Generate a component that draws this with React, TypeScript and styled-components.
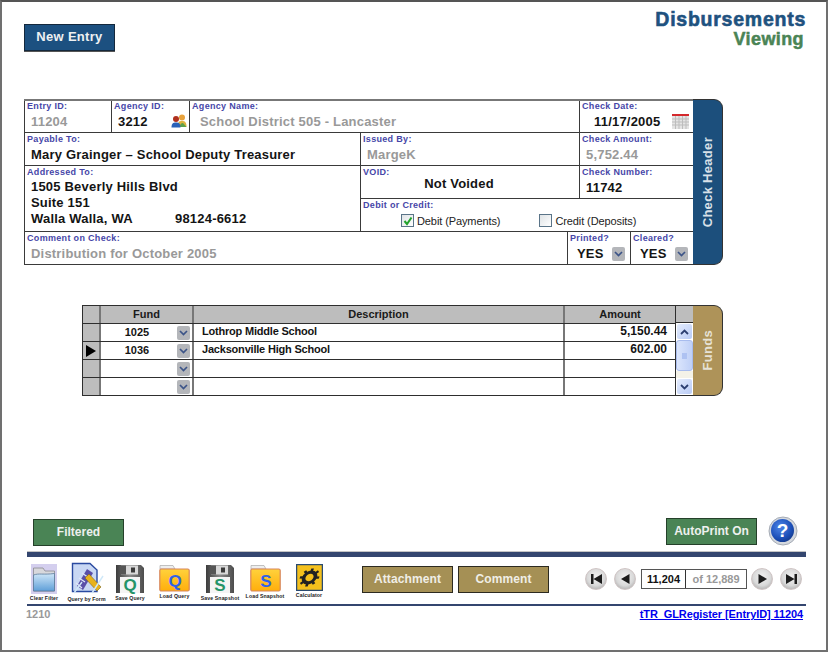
import React from 'react';
import styled, { createGlobalStyle } from 'styled-components';

const GlobalStyle = createGlobalStyle`
  html, body {
    margin: 0;
    padding: 0;
    background: #ffffff;
    font-family: "Liberation Sans", Arial, sans-serif;
  }
`;

const Page = styled.div`
  width: 828px;
  height: 652px;
  box-sizing: border-box;
  border: 2px solid #707070;
  border-top-color: #555;
  background: #fff;
  overflow: hidden;
`;

const Header = styled.header`
  height: 97px;
  box-sizing: border-box;
  display: flex;
  justify-content: space-between;
  align-items: flex-start;
  padding: 7px 20px 0 22px;
`;

const NewEntryButton = styled.button`
  width: 91px;
  height: 27px;
  margin-top: 15px;
  padding: 0 0 2px;
  background: #1c5080;
  border: 1px solid #14283c;
  box-shadow: 0 1px 0 #555;
  color: #eef0f2;
  font: bold 13px "Liberation Sans", Arial, sans-serif;
  letter-spacing: 0.3px;
`;

const TitleBlock = styled.div`
  text-align: right;
  font-weight: bold;
  line-height: 20px;
`;

const TitleMain = styled.div`
  color: #1f527f;
  font-size: 19.5px;
  letter-spacing: 0.75px;
  -webkit-text-stroke: 0.6px #1f527f;
`;

const TitleSub = styled.div`
  color: #4a8455;
  font-size: 18px;
  letter-spacing: 0.4px;
  padding-right: 2px;
  -webkit-text-stroke: 0.5px #4a8455;
`;

const CheckCard = styled.section`
  display: flex;
  margin-left: 22px;
  width: 699px;
  height: 166px;
`;

const FormGrid = styled.div`
  display: grid;
  grid-template-columns: 86px 77px 170px 206px 11px 50px 62px;
  grid-template-rows: 31px repeat(4, 32px);
  gap: 1px;
  padding: 0 0 1px 1px;
  background: #3a3a3a;
  border-top: 2px solid #777;
`;

const Field = styled.div<{ $col: string; $row?: string; $first?: boolean }>`
  grid-column: ${(p) => p.$col};
  grid-row: ${(p) => p.$row || 'auto'};
  background: #fff;
  padding: ${(p) => (p.$first ? 0 : 1)}px 2px 0 2px;
  min-width: 0;
`;

const Label = styled.div`
  color: #4646a8;
  font-size: 9px;
  font-weight: bold;
  line-height: 11px;
  letter-spacing: 0.32px;
  white-space: nowrap;
`;

const ValueRow = styled.div<{ $pad?: number; $end?: number }>`
  display: flex;
  justify-content: space-between;
  align-items: center;
  height: 18px;
  padding-left: ${(p) => p.$pad ?? 4}px;
  padding-right: ${(p) => p.$end ?? 0}px;
`;

const Value = styled.span<{ $muted?: boolean }>`
  color: ${(p) => (p.$muted ? '#999999' : '#141414')};
  font-size: 13px;
  font-weight: bold;
  letter-spacing: 0.2px;
  white-space: nowrap;
`;

const AddressLines = styled.div`
  padding: 1px 0 0 4px;
`;

const AddressLine = styled.div`
  height: 16px;
  line-height: 16px;
  color: #141414;
  font-size: 13px;
  font-weight: bold;
  letter-spacing: 0.2px;
  white-space: nowrap;
`;

const CityPart = styled.span`
  display: inline-block;
  width: 144px;
`;

const VoidValue = styled.div`
  padding-right: 22px;
  text-align: center;
  color: #141414;
  font-size: 13px;
  font-weight: bold;
  letter-spacing: 0.2px;
  line-height: 16px;
  margin-top: -2px;
`;

const ChoiceRow = styled.div`
  display: flex;
  align-items: center;
  padding: 3px 0 0 38px;
  gap: 39px;
`;

const Choice = styled.label`
  display: flex;
  align-items: center;
  gap: 3px;
  color: #222;
  font-size: 11px;
  letter-spacing: -0.1px;
  white-space: nowrap;
`;

const CheckBox = styled.span`
  width: 11px;
  height: 11px;
  flex: none;
  display: flex;
  align-items: center;
  justify-content: center;
  border: 1px solid #5a7488;
  background: linear-gradient(135deg, #dfe3e6, #ffffff);
`;

const SideTab = styled.div<{ $color: string; $text: string }>`
  width: 30px;
  flex: none;
  display: flex;
  align-items: center;
  justify-content: center;
  background: ${(p) => p.$color};
  color: ${(p) => p.$text};
  border-radius: 0 9px 9px 0;
  border: solid #333;
  border-width: 1px 1px 1px 0;
  box-sizing: border-box;
`;

const SideTabText = styled.span`
  writing-mode: vertical-rl;
  transform: rotate(180deg);
  font-size: 13px;
  font-weight: bold;
  letter-spacing: 0.3px;
`;

const ComboButton = styled.span`
  width: 13px;
  height: 14px;
  flex: none;
  display: flex;
  align-items: center;
  justify-content: center;
  background: #b4b6ba;
  border-radius: 2px;
`;

const YesRow = styled.div`
  display: flex;
  justify-content: space-between;
  align-items: center;
  height: 19px;
  padding: 0 3px 0 7px;
`;

const FundsCard = styled.section`
  display: flex;
  margin: 40px 0 0 80px;
  width: 641px;
  height: 91px;
`;

const FundsGrid = styled.div`
  width: 594px;
  flex: none;
  box-sizing: border-box;
  border: solid #2e2e2e;
  border-width: 1px 1px 0 1px;
`;

const FundRow = styled.div<{ $head?: boolean }>`
  display: grid;
  grid-template-columns: 18px 93px 371px 1fr;
  height: 18px;
  box-sizing: border-box;
  border-bottom: 1px solid #2e2e2e;
  background: ${(p) => (p.$head ? '#bdbdbd' : '#ffffff')};
`;

const Selector = styled.div`
  background: #bdbdbd;
  border-right: 2px solid #777;
  display: flex;
  align-items: center;
  justify-content: center;
`;

const HeadCell = styled.div<{ $last?: boolean }>`
  border-right: ${(p) => (p.$last ? '0' : '2px solid #777')};
  text-align: center;
  color: #1a1a1a;
  font-size: 11px;
  font-weight: bold;
  line-height: 17px;
`;

const FundCell = styled.div`
  border-right: 2px solid #777;
  display: flex;
  align-items: center;
  padding-right: 2px;
  font-size: 11px;
  font-weight: bold;
  color: #141414;
`;

const FundCode = styled.span`
  flex: 1;
  text-align: center;
  padding: 0 4px 2px 0;
`;

const DescCell = styled.div`
  border-right: 2px solid #777;
  padding-left: 8px;
  color: #141414;
  font-size: 11px;
  font-weight: bold;
  line-height: 15px;
  letter-spacing: -0.2px;
`;

const AmountCell = styled.div`
  padding-right: 8px;
  text-align: right;
  color: #141414;
  font-size: 12px;
  font-weight: bold;
  line-height: 15px;
`;

const ScrollColumn = styled.div`
  width: 17px;
  flex: none;
  display: flex;
  flex-direction: column;
  border-bottom: 1px solid #2e2e2e;
`;

const ScrollHead = styled.div`
  height: 18px;
  flex: none;
  box-sizing: border-box;
  background: #bdbdbd;
  border-top: 1px solid #2e2e2e;
  border-bottom: 1px solid #2e2e2e;
`;

const ScrollButton = styled.div`
  height: 17px;
  flex: none;
  display: flex;
  align-items: center;
  justify-content: center;
  box-sizing: border-box;
  background: linear-gradient(135deg, #e4ecfd, #b9cbf5);
  border: 1px solid #fff;
  border-radius: 3px;
`;

const ScrollThumb = styled.div`
  height: 31px;
  flex: none;
  display: flex;
  align-items: center;
  justify-content: center;
  box-sizing: border-box;
  background: linear-gradient(90deg, #dbe5fc, #bfd0f7);
  border: 1px solid #a8bcee;
  border-radius: 3px;
`;

const ThumbGrip = styled.span`
  width: 5px;
  height: 6px;
  background: #aec2f2;
`;

const ScrollTrack = styled.div`
  flex: 1;
  background: #f4f2e8;
`;

const ActionRow = styled.div`
  display: flex;
  justify-content: space-between;
  align-items: flex-start;
  height: 35px;
  margin-top: 120px;
  padding: 0 28px 0 31px;
`;

const GreenButton = styled.button<{ $top: number }>`
  width: 91px;
  height: 27px;
  margin-top: ${(p) => p.$top}px;
  padding: 0 0 1px;
  background: #4a8455;
  border: 1px solid #25402a;
  color: #eef0ee;
  font: bold 12px "Liberation Sans", Arial, sans-serif;
`;

const AutoGroup = styled.div`
  display: flex;
  align-items: flex-start;
  gap: 11px;
`;

const HeavyRule = styled.div`
  height: 5px;
  margin: 0 20px 0 25px;
  background: #34466f;
  border-top: 1px solid #c4c4c4;
`;

const ToolBar = styled.div`
  display: flex;
  align-items: flex-start;
  height: 47px;
  box-sizing: border-box;
  padding: 5px 0 0 21px;
`;

const ToolGroup = styled.div`
  display: flex;
  align-items: flex-start;
`;

const Tool = styled.div<{ $width: number; $top?: number }>`
  width: ${(p) => p.$width}px;
  margin-top: ${(p) => p.$top ?? 2}px;
  display: flex;
  flex-direction: column;
  align-items: center;
`;

const ToolCaption = styled.span`
  margin-top: 1px;
  color: #222;
  font-size: 5.2px;
  font-weight: bold;
  line-height: 6px;
  letter-spacing: 0.1px;
  white-space: nowrap;
`;

const TanGroup = styled.div`
  display: flex;
  gap: 5px;
  margin: 4px 0 0 31px;
`;

const TanButton = styled.button`
  width: 91px;
  height: 27px;
  padding: 0 0 1px;
  background: #a59055;
  border: 1px solid #2c2a20;
  color: #f0eee6;
  font: bold 12px "Liberation Sans", Arial, sans-serif;
  letter-spacing: 0.1px;
`;

const Navigator = styled.div`
  display: flex;
  align-items: center;
  margin: 6px 0 0 36px;
`;

const NavButton = styled.span<{ $gap?: number }>`
  width: 22px;
  height: 22px;
  flex: none;
  margin-left: ${(p) => p.$gap ?? 0}px;
  display: flex;
  align-items: center;
  justify-content: center;
  border-radius: 50%;
  box-sizing: border-box;
  background: radial-gradient(circle at 50% 40%, #f2f2f2 0%, #d9d9d9 55%, #b5b5b5 80%, #efe0e0 100%);
  border: 1px solid #cfc4c4;
`;

const RecordBox = styled.div`
  display: flex;
  height: 20px;
  margin: 0 4px 0 5px;
  box-sizing: border-box;
  border: 1px solid #555;
  font-size: 11px;
  font-weight: bold;
  line-height: 18px;
`;

const RecordCurrent = styled.span`
  width: 43px;
  text-align: center;
  color: #111;
  border-right: 1px solid #333;
`;

const RecordTotal = styled.span`
  width: 60px;
  text-align: center;
  color: #999;
  font-weight: bold;
`;

const ThinRule = styled.div`
  height: 2px;
  margin: 0 20px 0 25px;
  background: #34466f;
`;

const StatusRow = styled.div`
  display: flex;
  justify-content: space-between;
  padding: 2px 23px 0 24px;
  font-size: 11px;
  font-weight: bold;
`;

const RecordId = styled.span`
  color: #999;
`;

const SourceLink = styled.a`
  color: #0000ee;
  text-decoration: underline;
  font-size: 11px;
  letter-spacing: -0.1px;
`;

const ComboChevron = () => (
  <svg width="9" height="6" viewBox="0 0 9 6">
    <path d="M1 1 L4.5 4.5 L8 1" fill="none" stroke="#3c5488" strokeWidth="1.7" />
  </svg>
);

const PeopleIcon = () => (
  <svg width="16" height="14" viewBox="0 0 16 14">
    <circle cx="11" cy="3.5" r="3" fill="#e8a23c" />
    <path d="M6.5 13 C6.5 8 8 7 11 7 C14 7 15.5 8 15.5 13 Z" fill="#e0b23c" />
    <path d="M9 13 C9 10 10 9 12 9 L15.5 13 Z" fill="#5ca04a" />
    <circle cx="5" cy="5" r="3" fill="#b0301e" />
    <path d="M0.5 13.5 C0.5 9.5 2 8.5 5 8.5 C8 8.5 9.5 9.5 9.5 13.5 Z" fill="#2a62b8" />
  </svg>
);

const CalendarIcon = () => (
  <svg width="17" height="15" viewBox="0 0 17 15">
    <rect x="0" y="0" width="17" height="2" fill="#d4282c" />
    <rect x="0" y="2" width="17" height="13" fill="#e4e4e4" />
    <path
      d="M0 5 H17 M0 8 H17 M0 11 H17 M3.5 2 V15 M7 2 V15 M10.5 2 V15 M14 2 V15"
      stroke="#bdbdbd"
      strokeWidth="1"
    />
  </svg>
);

const GreenCheck = () => (
  <svg width="10" height="10" viewBox="0 0 10 10">
    <path d="M1.5 5 L4 8 L8.5 1.5" fill="none" stroke="#22a22c" strokeWidth="2" />
  </svg>
);

const RowPointer = () => (
  <svg width="10" height="12" viewBox="0 0 10 12">
    <path d="M0 0 L10 6 L0 12 Z" fill="#000" />
  </svg>
);

const ScrollChevron = ({ up }: { up?: boolean }) => (
  <svg width="9" height="6" viewBox="0 0 9 6">
    <path
      d={up ? 'M1 5 L4.5 1.5 L8 5' : 'M1 1 L4.5 4.5 L8 1'}
      fill="none"
      stroke="#2c3f70"
      strokeWidth="1.8"
    />
  </svg>
);

const HelpIcon = () => (
  <svg width="30" height="30" viewBox="0 0 30 30">
    <defs>
      <radialGradient id="helpBlue" cx="40%" cy="35%" r="70%">
        <stop offset="0%" stopColor="#4f86e8" />
        <stop offset="70%" stopColor="#1c4fb8" />
        <stop offset="100%" stopColor="#143a8c" />
      </radialGradient>
    </defs>
    <circle cx="15" cy="15" r="14" fill="#d4d8de" stroke="#a6acb6" strokeWidth="1" />
    <circle cx="14.5" cy="14.5" r="11.5" fill="url(#helpBlue)" />
    <text x="14.5" y="21" textAnchor="middle" fontFamily="Liberation Sans" fontSize="19" fontWeight="bold" fill="#fff">
      ?
    </text>
  </svg>
);

const ClearFilterIcon = () => (
  <svg width="26" height="30" viewBox="0 0 26 30">
    <defs>
      <linearGradient id="clearFolder" x1="0" y1="0" x2="0" y2="1">
        <stop offset="0%" stopColor="#cfe6f8" />
        <stop offset="100%" stopColor="#5f9fd8" />
      </linearGradient>
    </defs>
    <rect width="26" height="30" fill="#d4cfee" />
    <path d="M2.5 4 H12 L14 7 H23.5 V27 H2.5 Z" fill="#d8d8dc" stroke="#8a8a90" strokeWidth="0.8" />
    <path d="M2.5 11 C8 9 12 11 23.5 9.5 V27 H2.5 Z" fill="url(#clearFolder)" stroke="#5a7a9a" strokeWidth="0.8" />
  </svg>
);

const QueryFormIcon = () => (
  <svg width="34" height="33" viewBox="0 0 34 33">
    <rect x="2" y="1" width="23" height="30" fill="#ffffff" />
    <path d="M2.5 1.5 H20 L27 8 V29.5 H2.5 Z" fill="#c9d8f4" stroke="#2a4aa0" strokeWidth="1.4" />
    <path d="M7 24 L17 7 L23 11 L13 28 Z" fill="#5a4fa8" />
    <path d="M9 16 L15 20 M12 11 L19 16 M6 21 L12 26" stroke="#dfe6f8" strokeWidth="1.3" />
    <path d="M15 16 L19 12 L31 25 L27 29 Z" fill="#e8b21c" stroke="#7a6420" strokeWidth="0.6" />
    <path d="M4 31 L12 20 M22 31 L33 14" stroke="#cfe8f8" strokeWidth="1.4" />
  </svg>
);

const FloppyIcon = ({ letter }: { letter: string }) => (
  <svg width="30" height="30" viewBox="0 0 30 30">
    <defs>
      <linearGradient id={`floppy${letter}`} x1="0" y1="0" x2="1" y2="0">
        <stop offset="0%" stopColor="#3c3c3c" />
        <stop offset="50%" stopColor="#8a8a8a" />
        <stop offset="100%" stopColor="#4c4c4c" />
      </linearGradient>
    </defs>
    <path d="M1 1 H26 L29 4 V29 H1 Z" fill={`url(#floppy${letter})`} />
    <rect x="6" y="1.5" width="17" height="9" fill="#d8d8d8" />
    <rect x="6" y="1.5" width="5" height="9" fill="#555" />
    <rect x="16" y="3.5" width="4" height="5" fill="#3a3a3a" />
    <rect x="5" y="13" width="20" height="16" fill="#f4f4f4" />
    <text x="15" y="27" textAnchor="middle" fontFamily="Liberation Sans" fontSize="17" fontWeight="bold" fill="#249468">
      {letter}
    </text>
  </svg>
);

const FolderIcon = ({ letter }: { letter: string }) => (
  <svg width="31" height="28" viewBox="0 0 31 28">
    <defs>
      <linearGradient id={`folder${letter}`} x1="0" y1="0" x2="0" y2="1">
        <stop offset="0%" stopColor="#ffd23c" />
        <stop offset="100%" stopColor="#ffae0c" />
      </linearGradient>
    </defs>
    <path d="M1 1.5 H14 L16 5 H1 Z" fill="#eeeeee" stroke="#aaa" strokeWidth="0.7" />
    <rect x="0.8" y="5" width="29.4" height="22" rx="1.5" fill={`url(#folder${letter})`} stroke="#d8865c" strokeWidth="1.2" />
    <text x="16" y="23" textAnchor="middle" fontFamily="Liberation Sans" fontSize="17" fontWeight="bold" fill="#2f62e8">
      {letter}
    </text>
  </svg>
);

const CalculatorIcon = () => (
  <svg width="27" height="27" viewBox="0 0 27 27">
    <rect x="0.5" y="0.5" width="26" height="26" fill="#f4c01c" stroke="#2a4a70" strokeWidth="1.5" />
    <g transform="rotate(-35 13.5 13.5) translate(13.5 13.5) scale(1 0.72) translate(-13.5 -13.5)">
      <circle cx="13.5" cy="13.5" r="6.5" fill="none" stroke="#222" strokeWidth="4" />
      <path
        d="M13.5 2.5 V6 M13.5 21 V24.5 M2.5 13.5 H6 M21 13.5 H24.5 M5.7 5.7 L8.2 8.2 M18.8 18.8 L21.3 21.3 M5.7 21.3 L8.2 18.8 M18.8 8.2 L21.3 5.7"
        stroke="#222"
        strokeWidth="3"
      />
    </g>
  </svg>
);

const NavGlyph = ({ d }: { d: string }) => (
  <svg width="13" height="12" viewBox="0 0 13 12">
    <path d={d} fill="#1c1c1c" />
  </svg>
);

const fundRows = [
  { code: '1025', description: 'Lothrop Middle School', amount: '5,150.44' },
  { code: '1036', description: 'Jacksonville High School', amount: '602.00', current: true },
  { code: '', description: '', amount: '' },
  { code: '', description: '', amount: '' },
];

const App: React.FC = () => {
  return (
    <Page>
      <GlobalStyle />
      <Header>
        <NewEntryButton>New Entry</NewEntryButton>
        <TitleBlock>
          <TitleMain>Disbursements</TitleMain>
          <TitleSub>Viewing</TitleSub>
        </TitleBlock>
      </Header>

      <CheckCard>
        <FormGrid>
          <Field $col="1" $first>
            <Label>Entry ID:</Label>
            <ValueRow><Value $muted>11204</Value></ValueRow>
          </Field>
          <Field $col="2" $first>
            <Label>Agency ID:</Label>
            <ValueRow><Value>3212</Value><PeopleIcon /></ValueRow>
          </Field>
          <Field $col="3 / 6" $first>
            <Label>Agency Name:</Label>
            <ValueRow $pad={8}><Value $muted>School District 505 - Lancaster</Value></ValueRow>
          </Field>
          <Field $col="6 / 8" $first>
            <Label>Check Date:</Label>
            <ValueRow $pad={12} $end={2}><Value>11/17/2005</Value><CalendarIcon /></ValueRow>
          </Field>

          <Field $col="1 / 4">
            <Label>Payable To:</Label>
            <ValueRow><Value>Mary Grainger – School Deputy Treasurer</Value></ValueRow>
          </Field>
          <Field $col="4 / 6">
            <Label>Issued By:</Label>
            <ValueRow><Value $muted>MargeK</Value></ValueRow>
          </Field>
          <Field $col="6 / 8">
            <Label>Check Amount:</Label>
            <ValueRow><Value $muted>5,752.44</Value></ValueRow>
          </Field>

          <Field $col="1 / 4" $row="3 / 5">
            <Label>Addressed To:</Label>
            <AddressLines>
              <AddressLine>1505 Beverly Hills Blvd</AddressLine>
              <AddressLine>Suite 151</AddressLine>
              <AddressLine><CityPart>Walla Walla, WA</CityPart>98124-6612</AddressLine>
            </AddressLines>
          </Field>
          <Field $col="4 / 6" $row="3">
            <Label>VOID:</Label>
            <VoidValue>Not Voided</VoidValue>
          </Field>
          <Field $col="6 / 8" $row="3">
            <Label>Check Number:</Label>
            <ValueRow><Value>11742</Value></ValueRow>
          </Field>
          <Field $col="4 / 8" $row="4">
            <Label>Debit or Credit:</Label>
            <ChoiceRow>
              <Choice><CheckBox><GreenCheck /></CheckBox>Debit (Payments)</Choice>
              <Choice><CheckBox />Credit (Deposits)</Choice>
            </ChoiceRow>
          </Field>

          <Field $col="1 / 5" $row="5">
            <Label>Comment on Check:</Label>
            <ValueRow><Value $muted>Distribution for October 2005</Value></ValueRow>
          </Field>
          <Field $col="5 / 7" $row="5">
            <Label>Printed?</Label>
            <YesRow><Value>YES</Value><ComboButton><ComboChevron /></ComboButton></YesRow>
          </Field>
          <Field $col="7" $row="5">
            <Label>Cleared?</Label>
            <YesRow><Value>YES</Value><ComboButton><ComboChevron /></ComboButton></YesRow>
          </Field>
        </FormGrid>
        <SideTab $color="#1c4f7c" $text="#d8e0e8">
          <SideTabText>Check Header</SideTabText>
        </SideTab>
      </CheckCard>

      <FundsCard>
        <FundsGrid>
          <FundRow $head>
            <Selector />
            <HeadCell>Fund</HeadCell>
            <HeadCell>Description</HeadCell>
            <HeadCell $last>Amount</HeadCell>
          </FundRow>
          {fundRows.map((row, index) => (
            <FundRow key={index}>
              <Selector>{row.current && <RowPointer />}</Selector>
              <FundCell>
                <FundCode>{row.code}</FundCode>
                <ComboButton><ComboChevron /></ComboButton>
              </FundCell>
              <DescCell>{row.description}</DescCell>
              <AmountCell>{row.amount}</AmountCell>
            </FundRow>
          ))}
        </FundsGrid>
        <ScrollColumn>
          <ScrollHead />
          <ScrollButton><ScrollChevron up /></ScrollButton>
          <ScrollThumb><ThumbGrip /></ScrollThumb>
          <ScrollTrack />
          <ScrollButton><ScrollChevron /></ScrollButton>
        </ScrollColumn>
        <SideTab $color="#ae9359" $text="#e6e2d6">
          <SideTabText>Funds</SideTabText>
        </SideTab>
      </FundsCard>

      <ActionRow>
        <GreenButton $top={3}>Filtered</GreenButton>
        <AutoGroup>
          <GreenButton $top={2}>AutoPrint On</GreenButton>
          <HelpIcon />
        </AutoGroup>
      </ActionRow>
      <HeavyRule />

      <ToolBar>
        <ToolGroup>
          <Tool $width={42}><ClearFilterIcon /><ToolCaption>Clear Filter</ToolCaption></Tool>
          <Tool $width={43} $top={0}><QueryFormIcon /><ToolCaption>Query by Form</ToolCaption></Tool>
          <Tool $width={44}><FloppyIcon letter="Q" /><ToolCaption>Save Query</ToolCaption></Tool>
          <Tool $width={45}><FolderIcon letter="Q" /><ToolCaption>Load Query</ToolCaption></Tool>
          <Tool $width={46}><FloppyIcon letter="S" /><ToolCaption>Save Snapshot</ToolCaption></Tool>
          <Tool $width={44}><FolderIcon letter="S" /><ToolCaption>Load Snapshot</ToolCaption></Tool>
          <Tool $width={44}><CalculatorIcon /><ToolCaption>Calculator</ToolCaption></Tool>
        </ToolGroup>
        <TanGroup>
          <TanButton>Attachment</TanButton>
          <TanButton>Comment</TanButton>
        </TanGroup>
        <Navigator>
          <NavButton><NavGlyph d="M1 1 H3.5 V11 H1 Z M12 1 V11 L3.5 6 Z" /></NavButton>
          <NavButton $gap={7}><NavGlyph d="M10.5 1 V11 L2 6 Z" /></NavButton>
          <RecordBox>
            <RecordCurrent>11,204</RecordCurrent>
            <RecordTotal>of 12,889</RecordTotal>
          </RecordBox>
          <NavButton><NavGlyph d="M2.5 1 L11 6 L2.5 11 Z" /></NavButton>
          <NavButton $gap={7}><NavGlyph d="M1 1 L9.5 6 L1 11 Z M9.5 1 H12 V11 H9.5 Z" /></NavButton>
        </Navigator>
      </ToolBar>
      <ThinRule />
      <StatusRow>
        <RecordId>1210</RecordId>
        <SourceLink href="#">tTR_GLRegister [EntryID] 11204</SourceLink>
      </StatusRow>
    </Page>
  );
};

export default App;
